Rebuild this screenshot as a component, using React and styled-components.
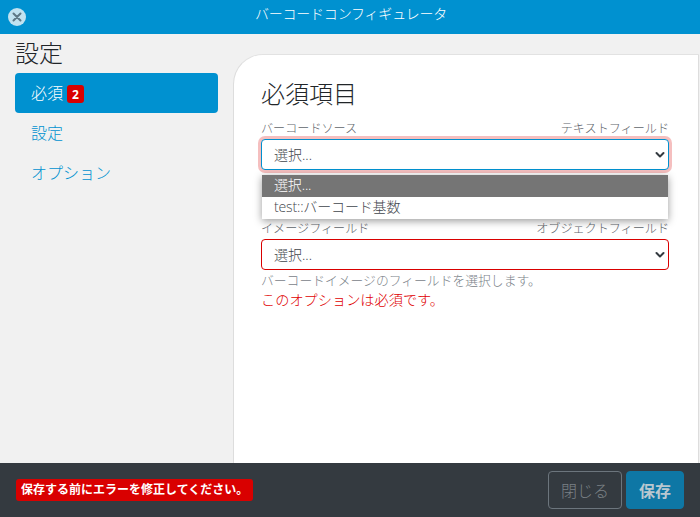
import React from "react";
import styled, { createGlobalStyle } from "styled-components";

const Global = createGlobalStyle`
  html, body { margin: 0; padding: 0; }
  body { font-family: "Open Sans", "Noto Sans CJK JP", sans-serif; background: #f1f1f1; }
  * { box-sizing: border-box; }
`;
const Page = styled.div`
  width: 700px; height: 517px; display: flex; flex-direction: column; overflow: hidden; background: #f1f1f1;
`;
const Header = styled.header`
  height: 34px; flex: none; background: #0091d0; display: flex; align-items: center; justify-content: center; position: relative;
`;
const Title = styled.div`
  color: #fff; font-size: 14px; letter-spacing: -0.2px; font-weight: 300; line-height: 1; position: relative; top: -3px; left: 1px;
`;
const Close = styled.button`
  position: absolute; left: 8px; top: 8px; width: 18px; height: 18px; padding: 0; border: 0; border-radius: 50%;
  background: #c2e2f0; display: flex; align-items: center; justify-content: center;
`;
const Body = styled.div`
  flex: 1; display: flex; min-height: 0;
`;
const Side = styled.aside`
  width: 233px; flex: none; padding: 5px 15px 0;
`;
const SideTitle = styled.h2`
  margin: 0 0 7px; font-size: 24px; font-weight: 300; line-height: 27px; color: #212529; padding-left: 0;
`;
const NavItem = styled.a`
  display: flex; align-items: center; height: 40px; padding-left: 16px; padding-bottom: 2px; border-radius: 4px; font-size: 16px; font-weight: 300;
  background: ${p => (p.$active ? "#0091d0" : "transparent")};
  color: ${p => (p.$active ? "#fff" : "#0091d0")};
`;
const Badge = styled.span`
  margin: 4px 0 0 4px; width: 17px; height: 18px; border-radius: 3px; background: #d90000; color: #fff; font-size: 12px; font-weight: 700;
  display: flex; align-items: center; justify-content: center;
`;
const Main = styled.main`
  flex: 1; margin: 20px 1px 0 0; background: #fff; border-left: 1px solid #ddd; border-top: 1px solid #e2e2e2; border-right: 1px solid #ddd; border-top-left-radius: 30px;
  padding: 24px 29px 0 27px; position: relative;
`;
const Heading = styled.h3`
  margin: 0 0 8px; font-size: 24px; font-weight: 300; line-height: 30px; color: #212529;
`;
const LabelRow = styled.div`
  display: flex; justify-content: space-between; align-items: flex-end; height: 20px; font-size: 12.1px; font-weight: 300; line-height: 16px; color: #5f666c;
`;
const SelectBox = styled.div`
  height: 31px; margin-top: 2px; display: flex; align-items: center; justify-content: space-between; padding: 0 2px 2px 12px; background: #fff;
  border: 1px solid ${p => (p.$focus ? "#0091d0" : "#d90000")}; border-radius: 4px; font-size: 14px; font-weight: 300; color: #3f464c;
  box-shadow: ${p => (p.$focus ? "0 0 0 3px rgba(217, 0, 0, .25)" : "none")};
`;
const Dropdown = styled.ul`
  position: absolute; left: 28px; top: 120px; width: 406px; margin: 0; padding: 0; list-style: none; background: #fff;
  box-shadow: 0 2px 8px rgba(0, 0, 0, .4); font-size: 14px; font-weight: 300; letter-spacing: -0.15px; z-index: 2;
`;
const Option = styled.li`
  height: 22px; padding-left: 12px; line-height: 20px;
  background: ${p => (p.$selected ? "#757575" : "#fff")};
  color: ${p => (p.$selected ? "#fff" : "#3f464c")};
`;
const Spacer = styled.div`
  height: 47px;
`;
const Help = styled.div`
  font-size: 12.8px; font-weight: 300; line-height: 19px; color: #7a8289; margin-top: 1px;
`;
const Err = styled.div`
  font-size: 14.2px; font-weight: 300; line-height: 20px; color: #e00000;
`;
const Footer = styled.footer`
  height: 54px; flex: none; background: #343a40; display: flex; align-items: center; justify-content: space-between; padding: 0 16px;
`;
const Alert = styled.div`
  height: 22px; margin-top: -1px; padding: 0 5px; border-radius: 3px; background: #d90000; color: #fff; font-size: 12px; font-weight: 700; line-height: 22px;
`;
const Actions = styled.div`
  display: flex; gap: 4px;
`;
const Btn = styled.button`
  width: ${p => p.$w}px; height: 38px; border-radius: 4px; font: inherit; font-size: 16px; padding: 0;
  border: 1px solid ${p => (p.$primary ? "#0e77a5" : "#6c757d")};
  background: ${p => (p.$primary ? "#0e77a5" : "transparent")};
  color: ${p => (p.$primary ? "#b9c8d0" : "#7b8186")};
  font-weight: ${p => (p.$primary ? 700 : 300)};
`;
const Chevron = () => (
  <svg width="12" height="12" viewBox="0 0 12 12"><path d="M2.5 5 L6 8.5 L9.5 5" fill="none" stroke="#343a40" strokeWidth="2" strokeLinecap="round" strokeLinejoin="round"/></svg>
);

export default function App() {
  return (
    <Page>
      <Global />
      <Header>
        <Close aria-label="close">
          <svg width="10" height="10" viewBox="0 0 10 10"><path d="M1.5 1.5 L8.5 8.5 M8.5 1.5 L1.5 8.5" stroke="#5f7886" strokeWidth="2" strokeLinecap="round"/></svg>
        </Close>
        <Title>バーコードコンフィギュレータ</Title>
      </Header>
      <Body>
        <Side>
          <SideTitle>設定</SideTitle>
          <NavItem $active>必須<Badge>2</Badge></NavItem>
          <NavItem>設定</NavItem>
          <NavItem>オプション</NavItem>
        </Side>
        <Main>
          <Heading>必須項目</Heading>
          <LabelRow><span>バーコードソース</span><span>テキストフィールド</span></LabelRow>
          <SelectBox $focus>選択...<Chevron /></SelectBox>
          <Dropdown>
            <Option $selected>選択...</Option>
            <Option>test::バーコード基数</Option>
          </Dropdown>
          <Spacer />
          <LabelRow><span>イメージフィールド</span><span>オブジェクトフィールド</span></LabelRow>
          <SelectBox>選択...<Chevron /></SelectBox>
          <Help>バーコードイメージのフィールドを選択します。</Help>
          <Err>このオプションは必須です。</Err>
        </Main>
      </Body>
      <Footer>
        <Alert>保存する前にエラーを修正してください。</Alert>
        <Actions>
          <Btn $w={74}>閉じる</Btn>
          <Btn $w={58} $primary>保存</Btn>
        </Actions>
      </Footer>
    </Page>
  );
}
